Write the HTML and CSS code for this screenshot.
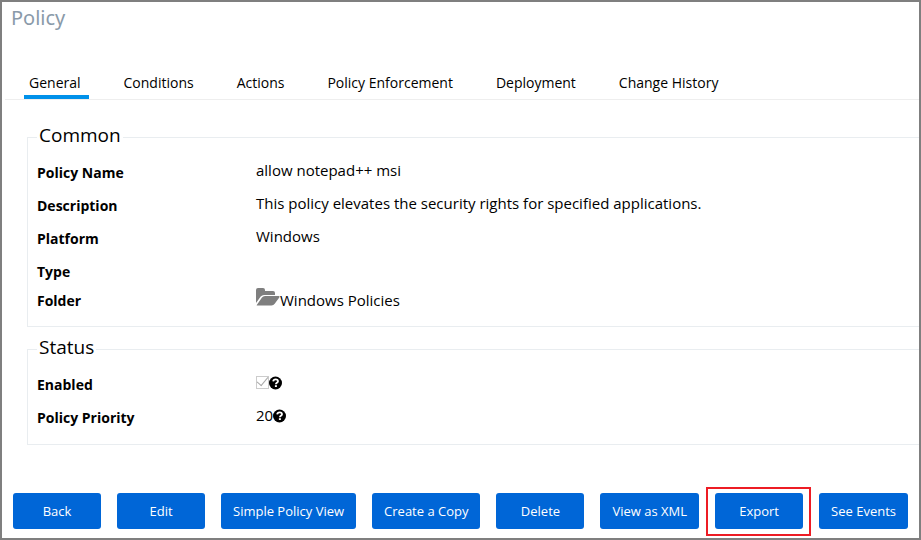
FILE: index.html
```html
<!DOCTYPE html>
<html lang="en">
<head>
<meta charset="utf-8">
<title>Policy</title>
<link rel="stylesheet" href="styles.css">
</head>
<body>
<svg class="symbols" aria-hidden="true">
  <symbol id="help" viewBox="0 0 14 14">
    <circle cx="6.5" cy="7" r="6.5"/>
    <path d="M4.2 5.4C4.4 3.9 5.3 3.3 6.6 3.3c1.5 0 2.4.8 2.4 2 0 1.6-2.1 1.5-2.1 3" fill="none" stroke="#fff" stroke-width="1.8"/>
    <path d="M5.9 9.2h2v1.8h-2z" fill="#fff"/>
  </symbol>
</svg>
<main class="page">
  <h1 class="title">Policy</h1>
  <nav class="tabs">
    <a class="tab active" href="#general">General</a>
    <a class="tab" href="#conditions">Conditions</a>
    <a class="tab" href="#actions">Actions</a>
    <a class="tab" href="#enforcement">Policy Enforcement</a>
    <a class="tab" href="#deployment">Deployment</a>
    <a class="tab" href="#history">Change History</a>
  </nav>
  <section class="panel" id="general">
    <fieldset class="group">
      <legend>Common</legend>
      <dl class="fields">
        <div class="row"><dt>Policy Name</dt><dd>allow notepad++ msi</dd></div>
        <div class="row"><dt>Description</dt><dd>This policy elevates the security rights for specified applications.</dd></div>
        <div class="row"><dt>Platform</dt><dd>Windows</dd></div>
        <div class="row compact"><dt>Type</dt><dd></dd></div>
        <div class="row folder"><dt>Folder</dt><dd><svg class="folder-icon" viewBox="0 0 24 18" aria-hidden="true"><path d="M0 15V2Q0 0 2 0H7Q9 0 9 2V3H17Q19 3 19 5V7H8Q6 7 4.7 8.5Z"/><path d="M.6 17.2 6 9.6Q7 8 9 8H22.6Q24.2 8 23.3 9.4L18.7 15.7Q17.5 17.4 15.5 17.4H1Q.4 17.4.6 17.2Z"/></svg>Windows Policies</dd></div>
      </dl>
    </fieldset>
    <fieldset class="group">
      <legend>Status</legend>
      <dl class="fields">
        <div class="row"><dt><label for="enabled">Enabled</label></dt><dd><input class="check" id="enabled" type="checkbox" checked disabled><svg class="help" aria-hidden="true"><use href="#help"/></svg></dd></div>
        <div class="row"><dt>Policy Priority</dt><dd>20<svg class="help" aria-hidden="true"><use href="#help"/></svg></dd></div>
      </dl>
    </fieldset>
  </section>
  <footer class="buttons">
    <button type="button">Back</button>
    <button type="button">Edit</button>
    <button type="button">Simple Policy View</button>
    <button type="button">Create a Copy</button>
    <button type="button">Delete</button>
    <button type="button">View as XML</button>
    <button type="button" class="marked">Export</button>
    <button type="button">See Events</button>
  </footer>
</main>
</body>
</html>
```
FILE: styles.css
```css
* { box-sizing: border-box; }
body {
  margin: 0;
  font: 14px/20px "Open Sans", "Noto Sans", sans-serif;
  color: #000;
  background: #fff;
}
.symbols { display: none; }
.page {
  min-height: 100vh;
  border: 2px solid #7f7f7f;
  display: flex;
  flex-direction: column;
  overflow: hidden;
}
.title {
  margin: 0;
  padding: 2px 9px;
  font: 20px/28px "Noto Sans", sans-serif;
  color: #8a9aa9;
}
.tabs {
  display: flex;
  gap: 30px;
  margin: 36px 0 0 3px;
  padding-left: 19px;
  border-bottom: 1px solid #eee;
}
.tab {
  padding: 3px 8px 2px 5px;
  border-bottom: 4px solid transparent;
  color: inherit;
  text-decoration: none;
}
.active { border-bottom-color: #0091ea; }
.panel { margin: 23px 0 0 25px; }
.group {
  min-width: 0;
  margin: 0;
  padding: 0 0 5px 9px;
  border: 1px solid #e9edf0;
  border-right: 0;
}
.group + .group { margin-top: 8px; }
legend {
  padding: 0 2px 4px;
  font-size: 19px;
  line-height: 24px;
}
.fields { margin: 0; padding-top: 10px; }
.row {
  display: grid;
  grid-template-columns: 219px 1fr;
  height: 33px;
}
.compact { height: 31px; }
dt { padding-top: 2px; font-weight: 700; }
dd {
  display: flex;
  align-items: center;
  height: 18px;
  margin: 0;
  font-size: 15px;
}
.folder { height: 30px; }
.folder dt { padding-top: 0; }
.folder-icon { width: 24px; height: 18px; fill: #7f7f7f; margin-bottom: 6px; }
.help { width: 14px; height: 14px; margin-top: 2px; }
.check {
  appearance: none;
  width: 13px;
  height: 13px;
  margin: 0;
  border: 1px solid #ccc;
  display: grid;
  place-items: center;
}
.check::before {
  content: "";
  width: 10px;
  height: 5px;
  border: solid #aaa;
  border-width: 0 0 1px 1px;
  transform: translateY(-2px) rotate(-50deg);
}
.buttons {
  display: flex;
  gap: 16px;
  margin-top: auto;
  padding: 0 11px 9px;
}
button {
  min-width: 88px;
  height: 36px;
  padding: 0 12px;
  border: 0;
  border-radius: 3px;
  background: #0066d7;
  color: #fff;
  font: 13px/20px "Open Sans", "Noto Sans", sans-serif;
  white-space: nowrap;
}
.marked { position: relative; }
.marked::after {
  content: "";
  position: absolute;
  inset: -6px -8px -7px -9px;
  border: 2px solid #ed1c24;
}
```
